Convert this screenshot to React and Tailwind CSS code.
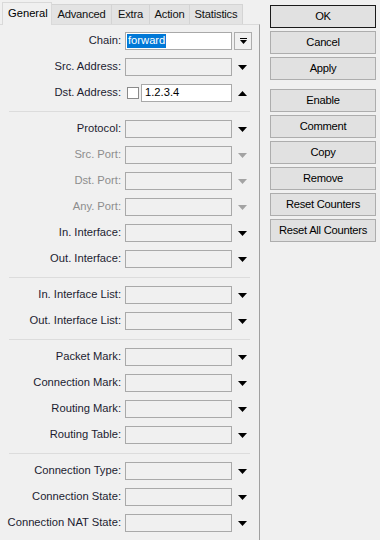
import React from 'react';

const FONT = { fontFamily: '"Liberation Sans", Arial, sans-serif' };

const TABS = ['General', 'Advanced', 'Extra', 'Action', 'Statistics'];
const TAB_W = ['w-[50px]', 'w-[60px]', 'w-[38px]', 'w-[40px]', 'w-[53px]'];

const BUTTONS_TOP = ['OK', 'Cancel', 'Apply'];
const BUTTONS_BOTTOM = ['Enable', 'Comment', 'Copy', 'Remove', 'Reset Counters', 'Reset All Counters'];

// little combo arrows, drawn like the winbox ones
const Arrow = ({ up = false, disabled = false }) => (
  <svg width="9" height="5" viewBox="0 0 9 5" className="ml-[6px]">
    <path
      d={up ? 'M0 5 L4.5 0 L9 5 Z' : 'M0 0 L9 0 L4.5 5 Z'}
      fill={disabled ? '#a3a3a3' : '#000'}
    />
  </svg>
);

const Label = ({ children, disabled }) => (
  <div
    className={
      'w-[121px] shrink-0 text-right whitespace-nowrap ' +
      (disabled ? 'text-[#8d8d8d]' : 'text-[#1c1c30]')
    }
  >
    {children}
  </div>
);

const Field = ({ label, disabled = false }) => (
  <div className="h-[26px] flex items-center">
    <Label disabled={disabled}>{label}</Label>
    <div className="ml-[4px] w-[107px] h-[18px] border border-[#a9a9a9] bg-[#f0f0f0]" />
    <Arrow disabled={disabled} />
  </div>
);

const Separator = () => (
  <div className="h-[10px] pt-[5px] px-[9px]">
    <div className="h-px bg-[#dcdcdc]" />
  </div>
);

const Button = ({ label, primary }) => (
  <div
    className={
      'w-[106px] h-[23px] flex items-center justify-center bg-[#e1e1e1] text-black tracking-[-0.25px] border ' +
      (primary ? 'border-[#1a1a1a]' : 'border-[#adadad]')
    }
  >
    {label}
  </div>
);

export default function App() {
  return (
    <div
      className="w-[380px] h-[540px] bg-[#f0f0f0] flex overflow-hidden text-[11.2px] leading-none"
      style={FONT}
    >
      {/* left: tab strip + general page */}
      <div className="w-[260px] shrink-0 flex flex-col">
        <div className="h-[24px] flex items-end pl-[2px]">
          {TABS.map((t, i) =>
            i === 0 ? (
              <div
                key={t}
                className={`${TAB_W[i]} h-[23px] -mb-px relative z-10 bg-[#f0f0f0] border border-b-0 border-[#d9d9d9] flex items-center pl-[5px] text-black`}
              >
                {t}
              </div>
            ) : (
              <div
                key={t}
                className={`${TAB_W[i]} h-[20px] bg-[#e3e3e3] border border-[#d4d4d4] border-l-0 border-b-0 flex items-center justify-center text-[#111] tracking-[-0.2px]`}
              >
                {t}
              </div>
            )
          )}
        </div>

        <div className="flex-1 border-t border-t-[#dadada] border-r border-r-[#a0a0a0] pt-[3px]">
          {/* Chain */}
          <div className="h-[26px] flex items-center">
            <Label>Chain:</Label>
            <div className="ml-[4px] w-[107px] h-[18px] border border-[#a9a9a9] bg-white flex items-center pl-[1px]">
              <span className="bg-[#0078d7] text-white h-[14px] flex items-center px-px">forward</span>
            </div>
            <div className="ml-[2px] w-[18px] h-[18px] border border-[#adadad] bg-[#f0f0f0] flex items-center justify-center">
              <svg width="7" height="7" viewBox="0 0 7 7">
                <rect x="0" y="0" width="7" height="1" fill="#000" />
                <path d="M0 2 L7 2 L3.5 6 Z" fill="#000" />
              </svg>
            </div>
          </div>

          <Field label="Src. Address:" />

          {/* Dst. Address */}
          <div className="h-[26px] flex items-center">
            <Label>Dst. Address:</Label>
            <div className="ml-[6px] w-[12px] h-[12px] border border-[#8a8a8a] bg-white" />
            <div className="ml-[2px] w-[91px] h-[18px] border border-[#a9a9a9] bg-white flex items-center pl-[3px] text-black">
              1.2.3.4
            </div>
            <Arrow up />
          </div>

          <Separator />

          <Field label="Protocol:" />
          <Field label="Src. Port:" disabled />
          <Field label="Dst. Port:" disabled />
          <Field label="Any. Port:" disabled />
          <Field label="In. Interface:" />
          <Field label="Out. Interface:" />

          <Separator />

          <Field label="In. Interface List:" />
          <Field label="Out. Interface List:" />

          <Separator />

          <Field label="Packet Mark:" />
          <Field label="Connection Mark:" />
          <Field label="Routing Mark:" />
          <Field label="Routing Table:" />

          <Separator />

          <Field label="Connection Type:" />
          <Field label="Connection State:" />
          <Field label="Connection NAT State:" />
        </div>
      </div>

      {/* right: action buttons */}
      <div className="pl-[10px] pt-[5px] flex flex-col">
        <div className="flex flex-col gap-[3px]">
          {BUTTONS_TOP.map((b, i) => (
            <Button key={b} label={b} primary={i === 0} />
          ))}
        </div>
        <div className="mt-[9px] flex flex-col gap-[3px]">
          {BUTTONS_BOTTOM.map((b) => (
            <Button key={b} label={b} />
          ))}
        </div>
      </div>
    </div>
  );
}
